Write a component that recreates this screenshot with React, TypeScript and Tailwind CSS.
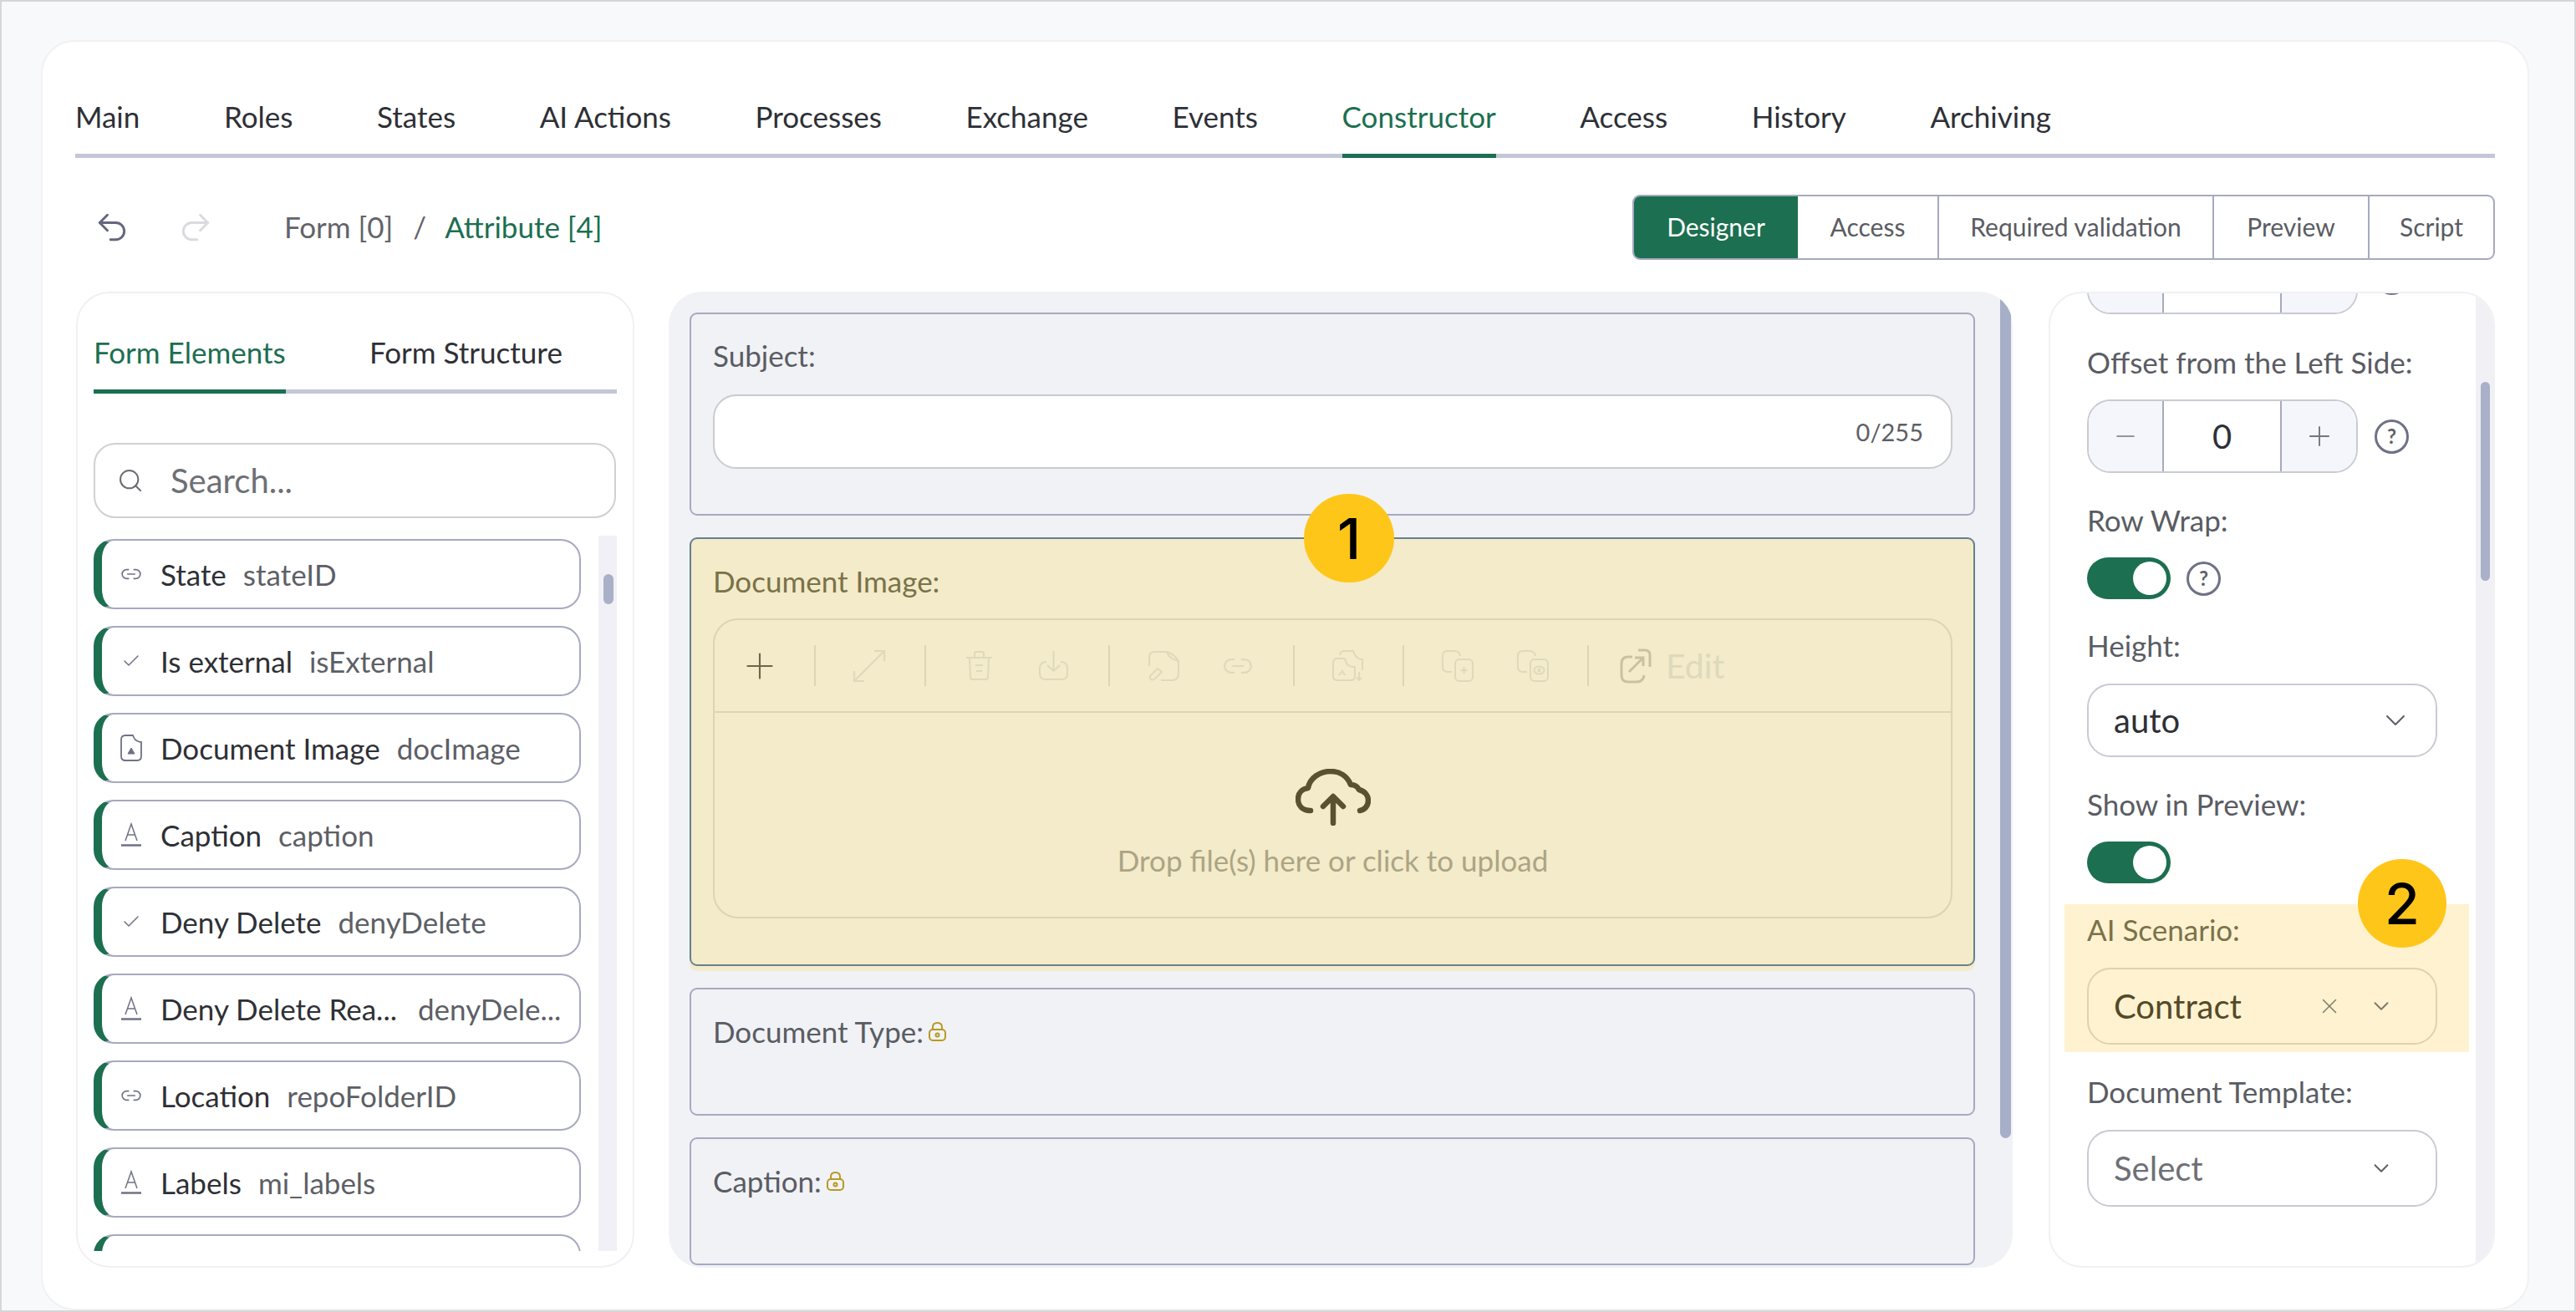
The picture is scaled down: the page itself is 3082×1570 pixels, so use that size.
import React from "react";
import { Check, ChevronDown, Link2, Minus, Plus, Redo2, Search, Undo2, X } from "lucide-react";

const tabs = ["Main", "Roles", "States", "AI Actions", "Processes", "Exchange", "Events", "Constructor", "Access", "History", "Archiving"];

function TextIcon() {
  return (
    <svg width="26" height="34" viewBox="0 0 26 34" fill="none" stroke="#6f7186" strokeWidth="1.5">
      <path d="M6 24 L13 4 L20 24 M8.5 17 H17.5" />
      <path d="M1 29.5 H25" strokeWidth="2.5" />
    </svg>
  );
}

function DocIcon() {
  return (
    <svg width="26" height="34" viewBox="0 0 26 34" fill="none" stroke="#6f7186" strokeWidth="1.8">
      <path d="M6 2 H15 Q17 7 19 8 Q22 10 25 10 V27 Q25 32 20 32 H6 Q1 32 1 27 V7 Q1 2 6 2 Z" />
      <path d="M9 24 L13 17 L17 24 Z" fill="#6f7186" strokeWidth="1" />
    </svg>
  );
}

function ListItem({ type, name, id }: { type: "link" | "check" | "doc" | "text"; name: string; id: string }) {
  return (
    <div className="flex h-[84px] w-[583px] shrink-0 items-center rounded-[24px] border-2 border-l-[10px] border-[#a7a9c0] border-l-[#1c6f50] bg-white pl-[22px] pr-[10px]">
      <span className="flex w-[26px] shrink-0 justify-center">
        {type === "link" && <Link2 size={28} strokeWidth={1.5} color="#6f7186" />}
        {type === "check" && <Check size={24} strokeWidth={1.5} color="#6f7186" />}
        {type === "doc" && <DocIcon />}
        {type === "text" && <TextIcon />}
      </span>
      <span className="ml-[22px] truncate text-[35px] text-[#2e3036]">{name}</span>
      <span className="ml-[20px] truncate text-[35px] text-[#5d5f66]">{id}</span>
    </div>
  );
}

function Help() {
  return (
    <span className="flex h-[41px] w-[41px] items-center justify-center rounded-full border-[3px] border-[#6f7186] text-[24px] font-bold leading-none text-[#5d5f66]">?</span>
  );
}

function Toggle() {
  return (
    <div className="flex h-[50px] w-[100px] items-center justify-end rounded-full bg-[#1c6f50] pr-[5px]">
      <span className="h-[40px] w-[40px] rounded-full bg-white" />
    </div>
  );
}

function Stepper({ value }: { value: string }) {
  return (
    <div className="flex h-[88px] w-[324px] overflow-hidden rounded-[28px] border-2 border-[#c9cbd3] bg-white">
      <span className="flex w-[90px] items-center justify-center border-r-2 border-[#a7a9c0] bg-[#f4f6fb]">
        <Minus size={34} strokeWidth={1.2} color="#73757f" />
      </span>
      <span className="flex flex-1 items-center justify-center text-[40px] text-[#2e3036]">{value}</span>
      <span className="flex w-[91px] items-center justify-center border-l-2 border-[#a7a9c0] bg-[#f4f6fb]">
        <Plus size={38} strokeWidth={1.2} color="#73757f" />
      </span>
    </div>
  );
}

function Label({ children, className = "" }: { children: React.ReactNode; className?: string }) {
  return <div className={`flex h-[44px] items-center pb-[2px] text-[35px] text-[#5a5c63] ${className}`}>{children}</div>;
}

function Lock() {
  return (
    <svg className="ml-[6px]" width="21" height="23" viewBox="0 0 21 23" fill="none" stroke="#b89a22" strokeWidth="2">
      <rect x="1" y="9" width="19" height="13" rx="4" />
      <path d="M5 9 V6 Q5 1 10.5 1 Q16 1 16 6 V9" />
      <circle cx="10.5" cy="15.5" r="2" />
    </svg>
  );
}

export default function App() {
  const faint = "#dfd9bc";
  const sep = "h-[49px] w-[2px] bg-[#ddd6b6]";
  return (
    <div className="h-[1570px] w-[3082px] overflow-hidden border-2 border-[#d6d6d6] bg-[#f8f9fa] pl-[47px] pt-[46px] font-['Lato','Carlito',sans-serif]">
      <div className="h-[1520px] w-[2977px] rounded-[40px] border-2 border-[#f1f1f4] bg-white pl-[39px] pr-[39px]">
        <nav className="flex h-[139px] w-[2895px] gap-[100.6px] border-b-[5px] border-[#c3c7d8] pt-[44px] text-[35px]">
          {tabs.map((t) => (
            <div
              key={t}
              className={
                t === "Constructor"
                  ? "-mb-[5px] flex h-[95px] items-center border-b-[5px] border-[#1c6f50] text-[#1c6f50]"
                  : "flex h-[90px] items-center text-[#2e3036]"
              }
            >
              {t}
            </div>
          ))}
        </nav>

        <div className="flex h-[160px] w-[2895px] items-start pt-[44px]">
          <div className="flex h-[77px] items-center pl-[22px]">
            <Undo2 size={44} strokeWidth={1.6} color="#64667e" />
            <Redo2 className="ml-[56px]" size={44} strokeWidth={1.6} color="#dadbdf" />
            <span className="ml-[84px] text-[35px] text-[#62646a]">Form [0]</span>
            <span className="ml-[24px] text-[35px] text-[#62646a]">/</span>
            <span className="ml-[22px] text-[35px] text-[#1c6f50]">Attribute [4]</span>
          </div>
          <div className="ml-auto flex h-[78px] w-[1032px] overflow-hidden rounded-[9px] border-2 border-[#a7a9c0] pb-[2px] text-[30px] text-[#5a5c63]">
            <div className="-mb-[2px] flex w-[196px] items-center justify-center bg-[#1c6f50] pb-[2px] text-white">Designer</div>
            <div className="flex w-[167px] items-center justify-center">Access</div>
            <div className="-mb-[2px] flex w-[331px] items-center justify-center border-x-2 border-[#a7a9c0] pb-[2px]">Required validation</div>
            <div className="flex w-[184px] items-center justify-center">Preview</div>
            <div className="-mb-[2px] flex flex-1 items-center justify-center border-l-2 border-[#a7a9c0] pb-[2px]">Script</div>
          </div>
        </div>

        <div className="flex h-[1168px] w-[2895px] pl-px">
          {/* left panel */}
          <div className="h-full w-[668px] shrink-0 rounded-[40px] border-2 border-[#f1f1f4] pl-[19px] pr-[19px]">
            <div className="flex h-[120px] w-[626px] border-b-[5px] border-[#c3c7d8] pt-[26px] text-[35px]">
              <div className="-mb-[5px] flex h-[94px] w-[230px] items-center border-b-[5px] border-[#1c6f50] text-[#1c6f50]">Form Elements</div>
              <div className="ml-[100px] flex h-[89px] items-center text-[#2e3036]">Form Structure</div>
            </div>
            <div className="mt-[59px] flex h-[90px] w-[625px] items-center rounded-[26px] border-2 border-[#cfd0d4] pl-[26px]">
              <Search size={32} strokeWidth={1.5} color="#6a6c72" />
              <span className="ml-[32px] text-[40px] text-[#6e7076]">Search...</span>
            </div>
            <div className="mt-[21px] flex h-[856px] w-[626px] overflow-hidden">
              <div className="flex w-[604px] flex-col gap-[20px] pt-[4px]">
                <ListItem type="link" name="State" id="stateID" />
                <ListItem type="check" name="Is external" id="isExternal" />
                <ListItem type="doc" name="Document Image" id="docImage" />
                <ListItem type="text" name="Caption" id="caption" />
                <ListItem type="check" name="Deny Delete" id="denyDelete" />
                <div className="flex h-[84px] w-[583px] shrink-0 items-center rounded-[24px] border-2 border-l-[10px] border-[#a7a9c0] border-l-[#1c6f50] bg-white pl-[22px] pr-[10px]">
                  <span className="flex w-[26px] shrink-0 justify-center"><TextIcon /></span>
                  <span className="ml-[22px] w-[284px] shrink-0 whitespace-nowrap text-[35px] text-[#2e3036]">Deny Delete Rea...</span>
                  <span className="ml-[24px] whitespace-nowrap text-[35px] text-[#5d5f66]">denyDele...</span>
                </div>
                <ListItem type="link" name="Location" id="repoFolderID" />
                <ListItem type="text" name="Labels" id="mi_labels" />
                <div className="h-[84px] w-[583px] shrink-0 rounded-[24px] border-2 border-l-[10px] border-[#a7a9c0] border-l-[#1c6f50] bg-white" />
              </div>
              <div className="h-full w-[22px] bg-[#f0f0f6] pl-[6px] pt-[46px]">
                <div className="h-[36px] w-[12px] rounded-full bg-[#a9b0c8]" />
              </div>
            </div>
          </div>

          {/* center panel */}
          <div className="ml-[41px] flex h-full w-[1608px] shrink-0 overflow-hidden rounded-[40px] bg-[#f0f2f6] pl-[25px]">
            <div className="flex w-[1538px] shrink-0 flex-col gap-[26px] pt-[25px]">
              <div className="h-[243px] rounded-[9px] border-2 border-[#a7a9c0] pl-[26px] pr-[25px] pt-[28px]">
                <Label>Subject:</Label>
                <div className="mt-[24px] flex h-[89px] items-center justify-end rounded-[28px] border-2 border-[#cacbd0] bg-white pr-[33px] text-[29px] text-[#5d5f66]">0/255</div>
              </div>
              <div className="relative h-[513px] rounded-[9px] border-2 border-[#66808f] bg-[#f3ebc9] pl-[26px] pr-[25px] pt-[29px] shadow-[0_6px_0_#f3ebc9]">
                <span className="absolute -top-[54px] left-[733px] flex h-[106px] w-[108px] items-center justify-center rounded-full bg-[#ffc61a] font-['Inter',sans-serif] text-[68px] font-medium text-black">1</span>
                <Label className="!text-[#7a7249]">Document Image:</Label>
                <div className="mt-[22px] h-[359px] rounded-[30px] border-2 border-[#dcd4b4]">
                  <div className="flex h-[111px] items-center border-b-2 border-[#dcd4b4]" style={{ color: faint }}>
                    <Plus className="ml-[29px]" size={50} strokeWidth={1} color="#6b6647" />
                    <span className={`ml-[40px] ${sep}`} />
                    <svg className="ml-[43px]" width="42" height="42" viewBox="0 0 42 42" fill="none" stroke="currentColor" strokeWidth="2.2">
                      <path d="M3 27 V39 H15 M27 3 H39 V15 M39 3 L3 39" />
                    </svg>
                    <span className={`ml-[45px] ${sep}`} />
                    <svg className="ml-[47px]" width="33" height="37" viewBox="0 0 33 37" fill="none" stroke="currentColor" strokeWidth="2">
                      <path d="M1 9 H32 M11 9 V4 Q11 2 13 2 H20 Q22 2 22 4 V9 M5 9 L6 33 Q6 35 9 35 H24 Q27 35 27 33 L28 9 M12 18 H21 M13 25 H20" />
                    </svg>
                    <svg className="ml-[54px]" width="37" height="37" viewBox="0 0 37 37" fill="none" stroke="currentColor" strokeWidth="2">
                      <path d="M10 14 Q2 14 2 22 V28 Q2 35 9 35 H28 Q35 35 35 28 V22 Q35 14 27 14 M18.5 1 V24 M11 18 L18.5 25 L26 18" />
                    </svg>
                    <span className={`ml-[47px] ${sep}`} />
                    <svg className="ml-[46px]" width="37" height="37" viewBox="0 0 37 37" fill="none" stroke="currentColor" strokeWidth="2">
                      <path d="M1 19 V8 Q1 2 8 2 H22 Q24 10 36 13 V28 Q36 36 28 36 H15 M22 2 Q30 4 36 13" />
                      <path d="M3 30 L11 22 L16 26 L8 34 Q4 37 2 34 Q1 32 3 30 Z" />
                    </svg>
                    <Link2 className="ml-[51px]" size={38} strokeWidth={1.4} />
                    <span className={`ml-[47px] ${sep}`} />
                    <svg className="ml-[45px]" width="37" height="37" viewBox="0 0 37 37" fill="none" stroke="currentColor" strokeWidth="2">
                      <path d="M6 10 H15 Q17 17 19 18 Q22 20 27 20 V31 Q27 36 22 36 H6 Q1 36 1 31 V15 Q1 10 6 10 Z" />
                      <path d="M9 6 Q10 1 14 1 H25 Q27 7 30 9 Q33 11 36 11 V24 M32 26 V36 M29 33 L32 36 L35 33 M8 30 L12 25 L15 30" />
                    </svg>
                    <span className={`ml-[47px] ${sep}`} />
                    <svg className="ml-[45px]" width="38" height="38" viewBox="0 0 38 38" fill="none" stroke="currentColor" strokeWidth="2">
                      <path d="M12 26 H7 Q1 26 1 20 V7 Q1 1 7 1 H15 Q21 1 22 7" />
                      <rect x="16" y="11" width="21" height="26" rx="5" />
                      <path d="M26.5 20 V28 M22.5 24 H30.5" />
                    </svg>
                    <svg className="ml-[52px]" width="38" height="38" viewBox="0 0 38 38" fill="none" stroke="currentColor" strokeWidth="2">
                      <path d="M12 26 H7 Q1 26 1 20 V7 Q1 1 7 1 H15 Q21 1 22 7" />
                      <rect x="16" y="11" width="21" height="26" rx="5" />
                      <ellipse cx="26.5" cy="24" rx="6" ry="4.5" />
                      <circle cx="26.5" cy="24" r="1.2" />
                    </svg>
                    <span className={`ml-[46px] ${sep}`} />
                    <svg className="ml-[37px]" width="38" height="42" viewBox="0 0 38 42" fill="none" stroke="#c9c2a0" strokeWidth="3">
                      <path d="M15 10 H10 Q2 10 2 18 V32 Q2 40 10 40 H20 Q28 40 29 32 M11 28 L28 11 M18 11 H28 V21 M22 2 H30 Q36 2 36 8 V22" />
                    </svg>
                    <span className="ml-[17px] text-[41px] text-[#dfd9bc]">Edit</span>
                  </div>
                  <div className="flex flex-col items-center pt-[67px]">
                    <svg width="90" height="68" viewBox="0 0 90 68" fill="none" stroke="#5a5130" strokeWidth="6.5" strokeLinecap="round" strokeLinejoin="round">
                      <path d="M18 50 C8 50 3 44 3 36 C3 29 8 24 15 23 C17 11 29 3 42 3 C53 3 62 9 66 19 C70 19 74 21 76 25 C84 27 87 33 87 38 C87 44 83 49 77 50" />
                      <path d="M45 65 V34 M33 45 L45 33 L57 45" />
                    </svg>
                    <span className="mt-[15px] text-[35px] text-[#aca485]">Drop file(s) here or click to upload</span>
                  </div>
                </div>
              </div>
              <div className="h-[153px] shrink-0 rounded-[9px] border-2 border-[#a7a9c0] pl-[26px] pt-[29px]">
                <Label>Document Type:<Lock /></Label>
              </div>
              <div className="h-[153px] shrink-0 rounded-[9px] border-2 border-[#a7a9c0] pl-[26px] pt-[29px]">
                <Label>Caption:<Lock /></Label>
              </div>
            </div>
            <div className="ml-[30px] h-[1013px] w-[13px] shrink-0 rounded-b-full bg-[#a7aec8]" />
          </div>

          {/* right panel */}
          <div className="ml-[43px] flex h-full w-[534px] shrink-0 overflow-hidden rounded-[40px] border-2 border-[#f1f1f4]">
            <div className="h-full w-[509px] shrink-0 overflow-hidden pl-[44px]">
              <div className="-mt-[63px] flex items-center gap-[20px]">
                <Stepper value="" />
                <Help />
              </div>
              <Label className="mt-[36px]">Offset from the Left Side:</Label>
              <div className="mt-[22px] flex items-center gap-[20px]">
                <Stepper value="0" />
                <Help />
              </div>
              <Label className="mt-[35px]">Row Wrap:</Label>
              <div className="mt-[22px] flex items-center gap-[19px]">
                <Toggle />
                <Help />
              </div>
              <Label className="mt-[34px]">Height:</Label>
              <div className="mt-[23px] flex h-[88px] w-[419px] items-center rounded-[28px] border-2 border-[#c9cbd3] pl-[30px] text-[40px] text-[#2e3036]">
                auto
                <ChevronDown className="ml-auto mr-[28px]" size={40} strokeWidth={1.2} color="#5d5f66" />
              </div>
              <Label className="mt-[35px]">Show in Preview:</Label>
              <div className="mt-[22px]"><Toggle /></div>
              <div className="relative mt-[25px] -ml-[27px] h-[177px] w-[484px] bg-[#fef2d0] pl-[27px] pt-[9px]">
                <span className="absolute -top-[54px] left-[351px] flex h-[106px] w-[106px] items-center justify-center rounded-full bg-[#ffc61a] font-['Inter',sans-serif] text-[68px] font-medium text-black">2</span>
                <Label className="!text-[#7a7249]">AI Scenario:</Label>
                <div className="mt-[23px] flex h-[92px] w-[419px] items-center rounded-[28px] border-2 border-[#ddd3b0] pl-[30px] text-[40px] text-[#544a27]">
                  Contract
                  <X className="ml-auto" size={30} strokeWidth={1.2} color="#7a7a6a" />
                  <ChevronDown className="ml-[32px] mr-[50px]" size={30} strokeWidth={1.5} color="#7a7a6a" />
                </div>
              </div>
              <Label className="mt-[26px]">Document Template:</Label>
              <div className="mt-[23px] flex h-[92px] w-[419px] items-center rounded-[28px] border-2 border-[#c9cbd3] pl-[30px] text-[40px] text-[#6e7076]">
                Select
                <ChevronDown className="ml-auto mr-[50px]" size={30} strokeWidth={1.5} color="#5d5f66" />
              </div>
            </div>
            <div className="h-full flex-1 bg-[#f0f0f5] pl-[6px] pt-[106px]">
              <div className="h-[238px] w-[11px] rounded-full bg-[#a9b0c8]" />
            </div>
          </div>
        </div>
      </div>
    </div>
  );
}
